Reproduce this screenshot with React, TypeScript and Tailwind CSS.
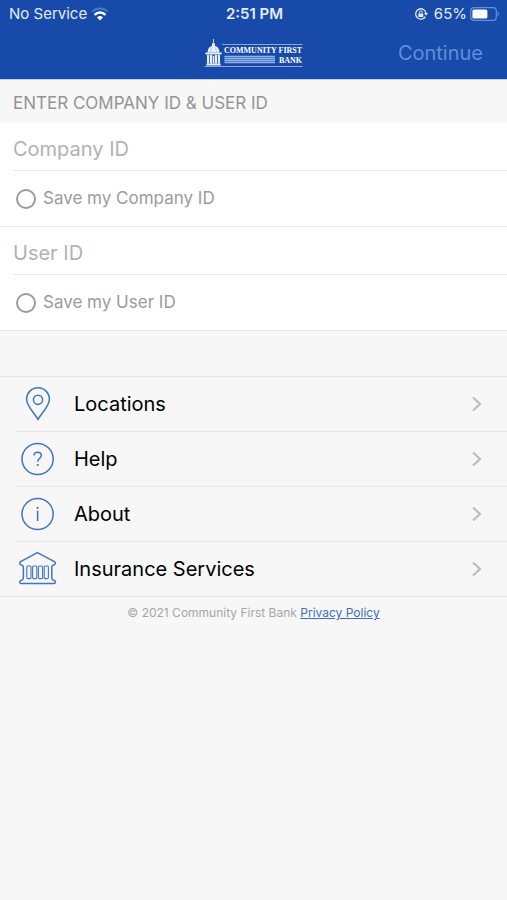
import { useState } from "react";
import type { ReactNode } from "react";

function WifiIcon() {
  return (
    <svg width="18" height="14" viewBox="0 0 18 14" aria-hidden="true">
      <path d="M1.2 4.6A11.4 11.4 0 0 1 16.8 4.6" fill="none" stroke="#4079cf" strokeWidth="2" />
      <path d="M3.6 7.8A7.6 7.6 0 0 1 14.4 7.8" fill="none" stroke="#fff" strokeWidth="2.4" />
      <path d="M6 10.4A4.4 4.4 0 0 1 12 10.4L9 13.4Z" fill="#fff" />
    </svg>
  );
}

function RotationLockIcon() {
  return (
    <svg width="14" height="14" viewBox="0 0 14 14" fill="none" stroke="#e3ecfa" aria-hidden="true">
      <path d="M11.4 9.6A5.2 5.2 0 1 1 12 6" strokeWidth="1.3" />
      <path d="M10 6h4l-2 2.8z" fill="#e3ecfa" stroke="none" />
      <rect x="4.3" y="6.4" width="5" height="3.6" rx="0.5" fill="#e3ecfa" stroke="none" />
      <path d="M5.4 6.5V5.3a1.4 1.4 0 0 1 2.8 0v1.2" strokeWidth="1" />
    </svg>
  );
}

function BatteryIcon() {
  return (
    <svg width="30" height="14" viewBox="0 0 30 14" aria-hidden="true">
      <rect x="0.7" y="0.7" width="25.6" height="12.6" rx="3.4" fill="none" stroke="#5f93da" strokeWidth="1.2" />
      <rect x="2.4" y="2.4" width="15" height="9.2" rx="1.6" fill="#fff" />
      <path d="M27.6 4.6a2.8 2.8 0 0 1 0 4.8z" fill="#5f93da" />
    </svg>
  );
}

function BankLogo() {
  return (
    <svg width="100" height="30" viewBox="0 0 100 30" role="img" aria-label="Community First Bank">
      <g fill="#e8f0fc">
        <path d="M9.1 1h0.8v5H9.1z" />
        <path d="M8 5.4h3v3H8z" />
        <path d="M3.6 14.6C3.6 10.4 6 7.8 9.5 7.8S15.4 10.4 15.4 14.6z" />
        <path d="M1.4 14.6h16.2v2H1.4zM2.4 25.6h14.2v1.8H2.4z" />
        <path d="M3 17h2v8.6H3zM5.8 17h2.4v8.6H5.8zM10.8 17h2.4v8.6h-2.4zM14 17H16v8.6h-2zM8.8 18h1.4v7.6H8.8z" />
      </g>
      <path d="M6.6 14.4C6.6 12 7.4 10 8.4 9M12.4 14.4C12.4 12 11.6 10 10.6 9" fill="none" stroke="#7fa5e2" strokeWidth="0.5" />
      <path d="M18 6.5H98.6M0.6 28.5H98.6" stroke="#8fb3ea" strokeWidth="0.9" />
      <path d="M20.4 18.5H71M20.4 20.5H71M20.4 22.5H71M20.4 24.5H71" stroke="#8fb3ea" strokeWidth="1.3" />
      <text x="20" y="15.4" fill="#fff" fontSize="8" fontWeight="700" fontFamily="'Liberation Serif', serif">
        COMMUNITY FIRST
      </text>
      <text x="98" y="25" textAnchor="end" fill="#fff" fontSize="8" fontWeight="700" fontFamily="'Liberation Serif', serif">
        BANK
      </text>
    </svg>
  );
}

function PinIcon() {
  return (
    <svg width="38" height="36" viewBox="0 0 38 36" fill="none" stroke="#3f73c8" strokeWidth="1.5" strokeLinejoin="round" aria-hidden="true">
      <path d="M19 33.6C16.4 28.2 7.6 20.4 7.6 13.2A11.4 11.4 0 0 1 30.4 13.2C30.4 20.4 21.6 28.2 19 33.6Z" />
      <circle cx="19" cy="13.8" r="4.6" />
    </svg>
  );
}

function HelpIcon() {
  return (
    <svg width="38" height="36" viewBox="0 0 38 36" fill="none" stroke="#3f73c8" strokeWidth="1.5" aria-hidden="true">
      <circle cx="18.6" cy="18" r="15.6" />
      <path d="M15 14.4C15 12.4 16.6 11.2 18.6 11.2S22.3 12.5 22.3 14.5C22.3 17.2 18.8 17.4 18.8 20.8" />
      <circle cx="18.8" cy="24" r="1.1" fill="#3f73c8" stroke="none" />
    </svg>
  );
}

function InfoIcon() {
  return (
    <svg width="38" height="36" viewBox="0 0 38 36" fill="none" stroke="#3f73c8" strokeWidth="1.5" aria-hidden="true">
      <circle cx="18.6" cy="18" r="15.6" />
      <path d="M18.6 14.6V25" />
      <circle cx="18.6" cy="11.8" r="1.1" fill="#3f73c8" stroke="none" />
    </svg>
  );
}

function BuildingIcon() {
  return (
    <svg width="38" height="36" viewBox="0 0 38 36" fill="none" stroke="#3f73c8" strokeWidth="1.5" strokeLinejoin="round" aria-hidden="true">
      <path d="M18.4 1.6L35.4 10.6Q36.6 11.4 36.2 12.8Q35.8 14 34.4 14Q32.6 14.4 32.8 16.4V26.6Q32.8 28.8 34.6 29.2Q36.4 29.4 36.4 31Q36.4 32.6 34.8 32.6H2.2Q0.8 32.6 0.8 31Q0.8 29.4 2.6 29.2Q4.4 28.8 4.4 26.6V16.4Q4.4 14.4 2.6 14Q1.2 14 0.8 12.8Q0.6 11.4 1.6 10.6Z" />
      <g strokeWidth="1.1">
        <rect x="7.8" y="15" width="4.2" height="12.6" rx="1" />
        <rect x="13.6" y="15" width="4.2" height="12.6" rx="1" />
        <rect x="19.4" y="15" width="4.2" height="12.6" rx="1" />
        <rect x="25.2" y="15" width="4.2" height="12.6" rx="1" />
      </g>
    </svg>
  );
}

function Chevron() {
  return (
    <svg width="12" height="16" viewBox="0 0 12 16" fill="none" stroke="#bdbdbf" strokeWidth="2.2" aria-hidden="true">
      <path d="M2 1.5L9 8L2 14.5" />
    </svg>
  );
}

function CredentialField({ name }: { name: string }) {
  const [value, setValue] = useState("");
  const [saved, setSaved] = useState(false);
  return (
    <div className="border-b border-[#e8e8e8] bg-white">
      <div className="ml-[13px] h-12 border-b border-[#e8e8e8]">
        <input
          type="text"
          aria-label={name}
          placeholder={name}
          value={value}
          onChange={(event) => setValue(event.target.value)}
          className="block h-full w-full bg-transparent pt-1 text-xl text-black outline-none placeholder:text-[#b2b2b2]"
        />
      </div>
      <label className="flex h-[55px] items-center gap-[7px] pl-4 text-[17px] text-[#9b9b9b]">
        <input
          type="checkbox"
          checked={saved}
          onChange={() => setSaved(!saved)}
          className="size-5 appearance-none rounded-full border-2 border-[#9b9b9b] checked:bg-[#184aaa]"
        />
        Save my {name}
      </label>
    </div>
  );
}

const links: { label: string; icon: ReactNode }[] = [
  { label: "Locations", icon: <PinIcon /> },
  { label: "Help", icon: <HelpIcon /> },
  { label: "About", icon: <InfoIcon /> },
  { label: "Insurance Services", icon: <BuildingIcon /> },
];

export default function App() {
  return (
    <div className="min-h-screen bg-[#f7f7f7] font-['Inter','Liberation_Sans',sans-serif]">
      <header className="border-b border-[#b5cdf0] bg-[#184aaa] text-[#e3ecfa]">
        <div className="grid h-7 grid-cols-[1fr_auto_1fr] items-center pr-[7px] pl-[9px] text-[15px]">
          <div className="flex items-center gap-1">
            <span>No Service</span>
            <WifiIcon />
          </div>
          <span className="font-semibold">2:51 PM</span>
          <div className="flex items-center justify-end">
            <RotationLockIcon />
            <span className="mr-[3px] ml-1.5">65%</span>
            <BatteryIcon />
          </div>
        </div>
        <div className="grid h-[51px] grid-cols-[1fr_auto_1fr] items-center px-6 pb-0.5">
          <span />
          <BankLogo />
          <button type="button" className="justify-self-end text-xl text-[#5f90d8]">
            Continue
          </button>
        </div>
      </header>

      <main>
        <form onSubmit={(event) => event.preventDefault()}>
          <h1 className="flex h-[43px] items-center pt-1 pl-[13px] text-[17px] text-[#949494]">ENTER COMPANY ID &amp; USER ID</h1>
          <CredentialField name="Company ID" />
          <CredentialField name="User ID" />
        </form>

        <nav className="mt-[45px] border-y border-[#e8e8e8]">
          <ul>
            {links.map((link) => (
              <li key={link.label} className="ml-[15px] h-[55px] border-b border-[#e8e8e8] last:h-[54px] last:border-b-0">
                <a href="#" className="flex h-full items-center pr-6 pl-1 text-xl text-black">
                  {link.icon}
                  <span className="mr-auto ml-[17px]">{link.label}</span>
                  <Chevron />
                </a>
              </li>
            ))}
          </ul>
        </nav>
      </main>

      <footer className="pt-2 text-center text-xs text-[#a6a6a6]">
        © 2021 Community First Bank{" "}
        <a href="#" className="text-[#3f6fc0] underline">
          Privacy Policy
        </a>
      </footer>
    </div>
  );
}
